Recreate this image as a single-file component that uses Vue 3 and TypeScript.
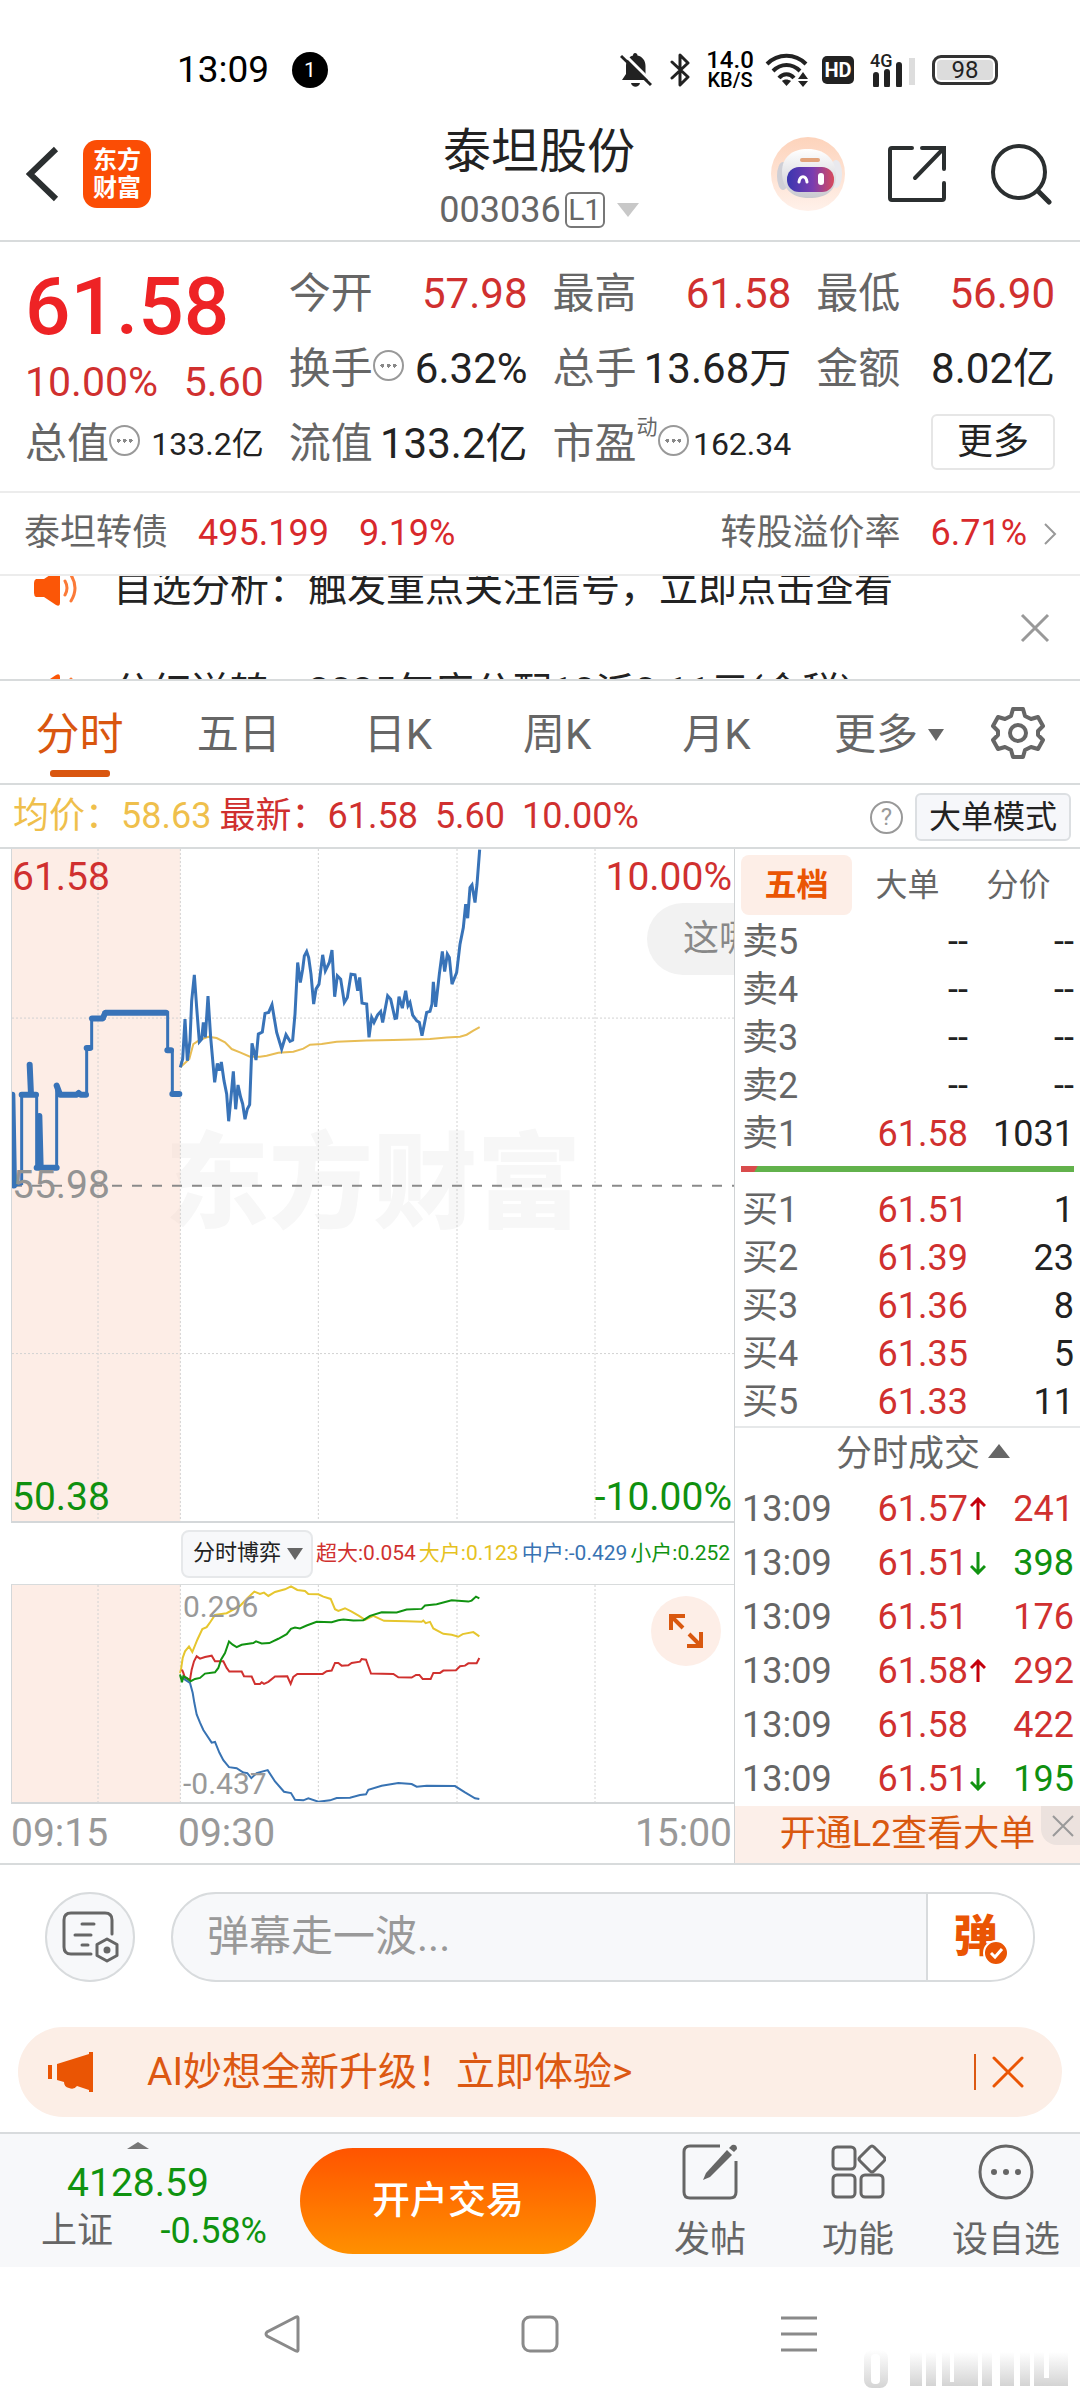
<script setup lang="ts">
interface QuoteRow {
  label: string
  price: string
  volume: string
}

interface TradeRow {
  time: string
  price: string
  volume: string
  move: 'up' | 'down' | ''
  side: 'buy' | 'sell'
}

const periods: string[] = ['分时', '五日', '日K', '周K', '月K']

const asks: QuoteRow[] = [
  { label: '卖5', price: '--', volume: '--' },
  { label: '卖4', price: '--', volume: '--' },
  { label: '卖3', price: '--', volume: '--' },
  { label: '卖2', price: '--', volume: '--' },
  { label: '卖1', price: '61.58', volume: '1031' },
]

const bids: QuoteRow[] = [
  { label: '买1', price: '61.51', volume: '1' },
  { label: '买2', price: '61.39', volume: '23' },
  { label: '买3', price: '61.36', volume: '8' },
  { label: '买4', price: '61.35', volume: '5' },
  { label: '买5', price: '61.33', volume: '11' },
]

const trades: TradeRow[] = [
  { time: '13:09', price: '61.57', volume: '241', move: 'up', side: 'buy' },
  { time: '13:09', price: '61.51', volume: '398', move: 'down', side: 'sell' },
  { time: '13:09', price: '61.51', volume: '176', move: '', side: 'buy' },
  { time: '13:09', price: '61.58', volume: '292', move: 'up', side: 'buy' },
  { time: '13:09', price: '61.58', volume: '422', move: '', side: 'buy' },
  { time: '13:09', price: '61.51', volume: '195', move: 'down', side: 'sell' },
]

const news: string[] = [
  '自选分析：触发重点关注信号，立即点击查看',
  '分红送转：2025年度分配10派0.11元(含税)',
]

// Intraday price after the open
const priceLine =
  '541,680 548,655 555,535 562,660 570,600 575,480 583,402 590,500 598,603 605,595 610,545 616,590 624,466 632,590 644,725 652,668 658,690 664,664 672,720 680,760 686,842 693,770 700,692 707,806 714,733 722,770 728,790 735,836 742,805 749,792 756,608 768,658 775,580 787,574 795,518 806,515 816,492 830,575 845,625 858,582 870,602 878,598 885,520 893,365 901,425 908,385 913,345 920,332 926,350 933,400 941,490 948,445 957,430 968,342 976,390 988,365 996,328 1004,468 1012,405 1022,415 1033,485 1042,470 1053,400 1065,402 1073,450 1079,410 1086,487 1100,490 1107,590 1115,530 1122,545 1133,522 1142,512 1148,545 1163,465 1172,475 1185,533 1190,532 1197,468 1207,502 1217,450 1224,495 1230,485 1238,523 1250,540 1258,545 1266,585 1280,515 1290,512 1296,490 1300,423 1307,498 1318,400 1327,332 1334,392 1342,340 1348,350 1356,430 1370,395 1380,310 1390,260 1397,190 1403,232 1410,140 1416,132 1425,185 1431,130 1439,26'

const averageLine =
  '541,680 568,655 580,610 600,597 625,588 650,592 675,605 695,625 720,635 750,648 780,648 800,645 835,636 880,633 910,624 930,612 965,610 1010,603 1100,599 1180,598 1290,595 1340,590 1380,588 1400,582 1420,570 1439,559'

const flowLines: { name: string; color: string; points: string }[] = [
  {
    name: 'large',
    color: '#e6c62e',
    points:
      '540,310 543,300 548,265 555,245 567,230 577,247 592,210 607,178 620,172 632,155 645,135 680,130 720,108 742,85 763,65 780,72 792,68 805,78 825,66 855,58 873,49 892,60 915,63 925,72 955,73 970,80 992,87 1005,118 1015,123 1035,115 1055,125 1077,138 1095,150 1120,138 1152,153 1220,154 1265,156 1270,152 1277,160 1290,156 1300,176 1330,192 1355,195 1375,201 1388,193 1420,187 1438,200',
  },
  {
    name: 'huge',
    color: '#d0312f',
    points:
      '546,300 550,310 555,325 570,330 575,300 582,275 590,260 600,267 615,262 635,258 645,275 670,275 680,295 688,306 725,306 732,320 755,321 765,343 780,343 785,338 792,343 805,337 825,321 862,320 872,343 880,322 892,313 968,313 980,305 995,303 1005,280 1015,280 1025,288 1045,287 1055,280 1080,276 1085,268 1098,270 1105,290 1113,312 1180,313 1195,323 1235,324 1248,316 1258,316 1268,328 1292,328 1300,310 1320,310 1330,303 1368,302 1380,290 1395,288 1405,281 1430,281 1438,265',
  },
  {
    name: 'medium',
    color: '#3873b3',
    points:
      '540,320 555,330 570,340 578,370 583,400 590,435 600,460 610,482 635,520 645,518 658,550 670,573 687,594 710,597 730,610 742,612 754,627 770,612 803,603 825,637 852,668 873,672 885,692 910,694 925,688 955,698 990,694 1010,687 1050,686 1080,678 1098,676 1105,662 1145,650 1195,642 1235,645 1250,653 1280,650 1365,651 1395,670 1425,688 1438,690',
  },
  {
    name: 'small',
    color: '#119311',
    points:
      '540,315 546,338 550,320 560,325 572,335 585,328 600,325 615,312 645,308 655,295 663,270 675,250 687,215 698,225 710,232 725,225 760,220 768,215 785,221 808,220 835,207 860,193 873,177 885,173 900,176 920,167 950,156 995,157 1015,151 1030,149 1060,152 1090,151 1110,138 1145,127 1190,128 1220,119 1265,117 1275,107 1310,103 1355,91 1405,95 1415,92 1428,80 1438,85',
  },
]

const gridX: number[] = [294, 541, 955, 1371, 1785]
</script>

<template>
  <div class="app">
    <div class="status">
      <span class="clock">13:09</span>
      <span class="count">1</span>
      <div class="status-icons">
        <svg class="i-bell" viewBox="0 0 32 34">
          <path d="M15 0c1.500 0 2.500 1 2.500 2.500 5 1.200 8 5 8 10.500v8l4 6H2l4-6v-8c0-5.500 3-9.300 7-10.500C13 1 13.800 0 15 0z" fill="#222" />
          <path d="M11 30h9c-1 5-8 5-9 0z" fill="#222" />
          <path d="M4 1l28 28" stroke="#fff" stroke-width="3" />
          <path d="M1 3l30 29" stroke="#222" stroke-width="3" />
        </svg>
        <svg class="i-bt" viewBox="0 0 20 34">
          <path d="M2 9l16 15-8 8V2l8 8L2 25" fill="none" stroke="#222" stroke-width="3" stroke-linejoin="round" stroke-linecap="round" />
        </svg>
        <span class="speed"><b>14.0</b><b class="unit">KB/S</b></span>
        <svg class="i-wifi" viewBox="0 0 44 34">
          <g fill="none" stroke="#222" stroke-width="4">
            <path d="M2 11c11-11 28-11 39 0" />
            <path d="M8 18c8-8 19-8 27 0" />
            <path d="M14 25c4-5 11-5 15 0" />
          </g>
          <path d="M17 28c2-2 6-2 9 0l-4.500 5z" fill="#222" />
          <path d="M33 26l5-7 5 7zM33 28l5 6 5-6z" fill="#222" />
        </svg>
        <span class="hd">HD</span>
        <span class="cell">
          <b>4G</b>
          <svg viewBox="0 0 46 34">
            <path d="M6 22v10M17 19v13M29 12v20" stroke="#222" stroke-width="6" stroke-linecap="round" />
            <path d="M42 5v27" stroke="#ddd" stroke-width="6" />
          </svg>
        </span>
        <span class="battery">98</span>
      </div>
    </div>

    <header class="header">
      <div class="head-left">
        <button class="plain" aria-label="返回">
          <svg width="34" height="56" viewBox="0 0 34 56"><path d="M30 3L4 28l26 25" fill="none" stroke="#2b2f30" stroke-width="6" /></svg>
        </button>
        <a class="logo" href="#"><span>东方</span><span>财富</span></a>
      </div>
      <div class="head-title">
        <h1>泰坦股份</h1>
        <div class="code">003036<span class="lv">L1</span><i class="tri-down"></i></div>
      </div>
      <div class="head-right">
        <button class="plain" aria-label="智能助手">
          <svg width="76" height="76" viewBox="0 0 76 76">
            <defs>
              <linearGradient id="halo" x1="0" y1="0" x2="0" y2="1"><stop offset="0" stop-color="#fdd3bb" /><stop offset="1" stop-color="#fff1ea" /></linearGradient>
              <linearGradient id="visor" x1="0" y1="0" x2="1" y2="0"><stop offset="0" stop-color="#3a36b0" /><stop offset=".55" stop-color="#7a3db0" /><stop offset="1" stop-color="#d84a5c" /></linearGradient>
              <linearGradient id="shell" x1="0" y1="0" x2="0" y2="1"><stop offset="0" stop-color="#fff" /><stop offset="1" stop-color="#c9c9cf" /></linearGradient>
            </defs>
            <circle cx="38" cy="38" r="37" fill="url(#halo)" />
            <ellipse cx="13" cy="40" rx="6" ry="14" fill="#cfcfd6" />
            <ellipse cx="66" cy="38" rx="6" ry="14" fill="#e9e9ee" />
            <path d="M12 36c0-15 10-23 26-23s27 9 28 25-9 24-27 24-27-10-27-26z" fill="url(#shell)" />
            <rect x="30" y="22" width="20" height="4" rx="2" fill="#e2a47c" />
            <rect x="17" y="31" width="47" height="25" rx="12" fill="url(#visor)" />
            <path d="M29 46c1-7 7-7 8 0" fill="none" stroke="#fff" stroke-width="3" stroke-linecap="round" />
            <rect x="48" y="37" width="6" height="12" rx="3" fill="#fff" />
          </svg>
        </button>
        <button class="plain" aria-label="分享">
          <svg width="60" height="60" viewBox="0 0 60 60" fill="none" stroke="#2b2f30" stroke-width="4">
            <path d="M24 4H4q-2 0-2 2v48q0 2 2 2h50q2 0 2-2V39M34 4h22v21M56 4L27 34" stroke-linecap="round" />
          </svg>
        </button>
        <button class="plain" aria-label="搜索">
          <svg width="62" height="62" viewBox="0 0 62 62" fill="none" stroke="#2b2f30" stroke-width="4">
            <circle cx="29" cy="29" r="26" /><path d="M48 48l11 11" stroke-width="5" stroke-linecap="round" />
          </svg>
        </button>
      </div>
    </header>

    <section class="quote">
      <div class="q-main">
        <strong>61.58</strong>
        <div class="q-change"><span>10.00%</span><span>5.60</span></div>
      </div>
      <div class="q-cell"><span>今开</span><b class="red">57.98</b></div>
      <div class="q-cell"><span>最高</span><b class="red">61.58</b></div>
      <div class="q-cell"><span>最低</span><b class="red">56.90</b></div>
      <div class="q-cell"><span>换手<i class="dots"></i></span><b>6.32%</b></div>
      <div class="q-cell"><span>总手</span><b>13.68万</b></div>
      <div class="q-cell"><span>金额</span><b>8.02亿</b></div>
      <div class="q-cell"><span>总值<i class="dots"></i></span><b class="small">133.2亿</b></div>
      <div class="q-cell"><span>流值</span><b>133.2亿</b></div>
      <div class="q-cell"><span>市盈<sup>动</sup><i class="dots"></i></span><b class="small">162.34</b></div>
      <div class="q-cell end"><button class="more">更多</button></div>
    </section>

    <a class="bond" href="#">
      <span>泰坦转债</span><b>495.199</b><b>9.19%</b>
      <span class="push">转股溢价率</span><b>6.71%</b>
      <svg width="14" height="24" viewBox="0 0 14 24"><path d="M2 2l10 10L2 22" fill="none" stroke="#999" stroke-width="2" /></svg>
    </a>

    <section class="news">
      <ul>
        <li v-for="n in news" :key="n">
          <svg width="46" height="38" viewBox="0 0 46 38">
            <path d="M2 10h8L22 2q4-2 4 2v30q0 4-4 2L10 28H2q-2-1-2-4V14q0-3 2-4z" fill="#fb5607" />
            <path d="M31 12q4 7 0 14M37 6q8 13 0 26" fill="none" stroke="#fb7a38" stroke-width="3" stroke-linecap="round" />
          </svg>
          <a href="#">{{ n }}</a>
        </li>
      </ul>
      <button class="plain news-close" aria-label="关闭">
        <svg width="30" height="30" viewBox="0 0 30 30"><path d="M2 2l26 26M28 2L2 28" stroke="#999" stroke-width="3" /></svg>
      </button>
    </section>

    <nav class="periods">
      <button v-for="(p, i) in periods" :key="p" :class="{ active: i === 0 }">{{ p }}</button>
      <button class="all">更多<i class="caret"></i></button>
      <button class="gear" aria-label="设置">
        <svg width="54" height="54" viewBox="0 0 54 54" fill="none" stroke="#666" stroke-width="4" stroke-linejoin="round">
          <path d="M22 3h10l2 7 6 3 7-2 5 9-5 5v4l5 5-5 9-7-2-6 3-2 7H22l-2-7-6-3-7 2-5-9 5-5v-4l-5-5 5-9 7 2 6-3z" />
          <circle cx="27" cy="27" r="8" />
        </svg>
      </button>
    </nav>

    <div class="legend">
      <span class="avg">均价：58.63</span>
      <span class="latest">最新：61.58</span>
      <span class="latest">5.60</span>
      <span class="latest">10.00%</span>
      <button class="help" aria-label="说明">?</button>
      <button class="mode">大单模式</button>
    </div>

    <main class="board">
      <div class="charts">
        <div class="plot">
          <span class="ghost">东方财富</span>
          <svg class="canvas" viewBox="36 24 2166 2019" preserveAspectRatio="none">
            <rect class="pre" x="36" y="24" width="505" height="2019" />
            <g class="grid">
              <path v-for="x in gridX" :key="x" :d="`M${x} 24V2043`" />
              <path d="M36 532H2202M36 1540H2202" />
            </g>
            <path class="zero" d="M36 1036H2202" />
            <polyline class="avg-line" :points="averageLine" />
            <path class="price thin" d="M40 1035L65 1030V762H110V982H170V735L180 762H260V622H275V533H312V516H503V629H517V760H540" />
            <path class="price thick" d="M37 762L42 1035M65 762H108M89 672L93 762M118 826L122 982M110 982H170M170 735L180 762H230L236 757L242 762H258M260 622H270M276 533H308L316 516H498M502 629H513M517 760H538" />
            <polyline class="price line" :points="priceLine" />
          </svg>
          <span class="tag hi red">61.58</span>
          <span class="tag hi pct red">10.00%</span>
          <span class="tag mid">55.98</span>
          <span class="tag lo green">50.38</span>
          <span class="tag lo pct green">-10.00%</span>
          <div class="bubble">这哪</div>
        </div>

        <div class="flow-legend">
          <div class="picker">
            <select aria-label="分时指标"><option>分时博弈</option></select>
            <i class="caret"></i>
          </div>
          <span class="c-huge">超大:0.054</span>
          <span class="c-large">大户:0.123</span>
          <span class="c-medium">中户:-0.429</span>
          <span class="c-small">小户:0.252</span>
        </div>

        <div class="plot sub">
          <svg class="canvas" viewBox="36 45 2166 654" preserveAspectRatio="none">
            <rect class="pre" x="36" y="45" width="505" height="654" />
            <g class="grid"><path v-for="x in gridX" :key="x" :d="`M${x} 45V699`" /></g>
            <polyline v-for="f in flowLines" :key="f.name" class="flow" :points="f.points" :stroke="f.color" />
          </svg>
          <span class="scale high">0.296</span>
          <span class="scale low">-0.437</span>
          <button class="expand" aria-label="全屏">
            <svg width="36" height="36" viewBox="0 0 36 36" fill="none" stroke="#d9580f" stroke-width="4">
              <path d="M3 17V3h14M3 3l12 12M33 19v14H19M33 33L21 21" />
            </svg>
          </button>
        </div>

        <div class="times"><span>09:15</span><span>09:30</span><span>15:00</span></div>
      </div>

      <aside class="depth">
        <div class="depth-tabs">
          <button class="active">五档</button><button>大单</button><button>分价</button>
        </div>
        <table class="levels">
          <tbody>
            <tr v-for="r in asks" :key="r.label">
              <th scope="row">{{ r.label }}</th>
              <td :class="{ red: r.price !== '--' }">{{ r.price }}</td>
              <td>{{ r.volume }}</td>
            </tr>
          </tbody>
        </table>
        <div class="ratio"><i></i></div>
        <table class="levels">
          <tbody>
            <tr v-for="r in bids" :key="r.label">
              <th scope="row">{{ r.label }}</th>
              <td class="red">{{ r.price }}</td>
              <td>{{ r.volume }}</td>
            </tr>
          </tbody>
        </table>
        <button class="trades-head">分时成交<i></i></button>
        <table class="trades">
          <tbody>
            <tr v-for="(t, i) in trades" :key="i">
              <th scope="row">{{ t.time }}</th>
              <td class="red">{{ t.price }}</td>
              <td class="arrow">
                <svg v-if="t.move === 'up'" width="16" height="24" viewBox="0 0 16 24" fill="none" stroke="#c4000c" stroke-width="3"><path d="M8 23V2M1 9l7-7 7 7" /></svg>
                <svg v-else-if="t.move === 'down'" width="16" height="24" viewBox="0 0 16 24" fill="none" stroke="#119311" stroke-width="3"><path d="M8 1v21M1 15l7 7 7-7" /></svg>
              </td>
              <td :class="t.side === 'buy' ? 'red' : 'green'">{{ t.volume }}</td>
            </tr>
          </tbody>
        </table>
        <div class="promo">
          <a href="#">开通L2查看大单</a>
          <button aria-label="关闭推广">
            <svg width="22" height="22" viewBox="0 0 22 22"><path d="M1 1l20 20M21 1L1 21" stroke="#999" stroke-width="2" /></svg>
          </button>
        </div>
      </aside>
    </main>

    <section class="barrage">
      <button class="b-set" aria-label="弹幕设置">
        <svg width="58" height="54" viewBox="0 0 58 54" fill="none" stroke="#666" stroke-width="3" stroke-linecap="round">
          <path d="M30 44H10q-7 0-7-7V10q0-7 7-7h34q7 0 7 7v14" />
          <path d="M21 14h12M14 25h16M21 35h6" />
          <path d="M46 29l10 5.500v11L46 51l-10-5.500v-11z" stroke-linejoin="round" /><circle cx="46" cy="40" r="2" fill="#666" />
        </svg>
      </button>
      <div class="b-field">
        <input type="text" placeholder="弹幕走一波..." aria-label="弹幕" />
        <button aria-label="弹幕开关">
          弹
          <svg width="26" height="26" viewBox="0 0 26 26"><circle cx="13" cy="13" r="12" fill="#ea5504" stroke="#fff" stroke-width="2" /><path d="M8 13l4 4 7-8" fill="none" stroke="#fff" stroke-width="3" /></svg>
        </button>
      </div>
    </section>

    <section class="banner">
      <svg width="46" height="40" viewBox="0 0 46 40" fill="#ea5504">
        <path d="M0 13h4v14H0zM9 12L41 2V0h4v40h-4v-2l-12-4q-3 4-8 2-5-1-5-6l-7-2z" />
      </svg>
      <a href="#">AI妙想全新升级！立即体验&gt;</a>
      <i></i>
      <button class="plain" aria-label="关闭横幅">
        <svg width="32" height="32" viewBox="0 0 32 32"><path d="M2 2l28 28M30 2L2 30" stroke="#ea5504" stroke-width="3" stroke-linecap="round" /></svg>
      </button>
    </section>

    <footer class="dock">
      <button class="index">
        <i></i>
        <b>4128.59</b>
        <span>上证<em>-0.58%</em></span>
      </button>
      <button class="trade">开户交易</button>
      <div class="actions">
        <button>
          <svg width="56" height="56" viewBox="0 0 56 56" fill="none" stroke="#666" stroke-width="3">
            <path d="M38 2H8Q2 2 2 8v40q0 6 6 6h40q6 0 6-6V17" />
            <path d="M21 36l3-7 21-23 5 5-22 22z" fill="#666" stroke="none" /><path d="M47 4l3-3q5-1 5 4l-3 3z" fill="#666" stroke="none" />
          </svg>
          发帖
        </button>
        <button>
          <svg width="56" height="56" viewBox="0 0 56 56" fill="none" stroke="#666" stroke-width="3">
            <rect x="3" y="3" width="22" height="22" rx="4" /><rect x="3" y="31" width="22" height="22" rx="4" /><rect x="31" y="31" width="22" height="22" rx="4" />
            <path d="M40 3q2-2 4 0l10 10q2 2 0 4L44 27q-2 2-4 0L30 17q-2-2 0-4z" />
          </svg>
          功能
        </button>
        <button>
          <svg width="56" height="56" viewBox="0 0 56 56">
            <circle cx="28" cy="28" r="26" fill="none" stroke="#666" stroke-width="3" />
            <g fill="#666"><circle cx="16" cy="28" r="3" /><circle cx="28" cy="28" r="3" /><circle cx="40" cy="28" r="3" /></g>
          </svg>
          设自选
        </button>
      </div>
    </footer>

    <div class="sysnav">
      <button class="plain" aria-label="系统返回">
        <svg width="38" height="38" viewBox="0 0 38 38"><path d="M36 3v32q0 2-2 1L5 21q-2-2 0-4L34 2q2-1 2 1z" fill="none" stroke="#8a8a8a" stroke-width="3" /></svg>
      </button>
      <button class="plain" aria-label="主屏幕">
        <svg width="38" height="38" viewBox="0 0 38 38"><rect x="2" y="2" width="34" height="34" rx="7" fill="none" stroke="#8a8a8a" stroke-width="3" /></svg>
      </button>
      <button class="plain" aria-label="最近任务">
        <svg width="38" height="38" viewBox="0 0 38 38"><path d="M1 3h36M1 19h36M1 35h36" stroke="#8a8a8a" stroke-width="3" /></svg>
      </button>
      <svg class="stamp" width="220" height="40" viewBox="0 0 220 40">
        <defs><linearGradient id="fade" x1="0" y1="0" x2="0" y2="1"><stop offset="0" stop-color="#fff" /><stop offset="1" stop-color="#d4d4d4" /></linearGradient></defs>
        <g fill="url(#fade)">
          <rect x="10" y="0" width="24" height="38" rx="8" /><rect x="56" y="2" width="12" height="34" /><rect x="72" y="2" width="10" height="34" /><rect x="88" y="2" width="36" height="34" />
          <rect x="128" y="2" width="10" height="34" /><rect x="146" y="2" width="14" height="34" /><rect x="166" y="2" width="10" height="34" /><rect x="180" y="2" width="34" height="34" />
        </g>
        <g fill="#fff"><rect x="17" y="4" width="9" height="30" rx="4" /><rect x="96" y="2" width="4" height="30" /><rect x="190" y="2" width="5" height="26" /></g>
      </svg>
    </div>
  </div>
</template>

<style>
body {
  margin: 0;
  background: #fff;
}
</style>

<style scoped>
.app {
  background: #fff;
  color: #222;
  font-family: Roboto, 'Noto Sans CJK SC', sans-serif;
  font-size: 36px;
  line-height: 1.2;
}
.app * {
  box-sizing: border-box;
}
button,
input,
select {
  font: inherit;
  color: inherit;
  border: 0;
  margin: 0;
  padding: 0;
  background: none;
}
a {
  color: inherit;
  text-decoration: none;
}
i,
em {
  font-style: normal;
}
b {
  font-weight: 400;
}
svg {
  display: block;
  flex: none;
}
.plain {
  display: flex;
}
.red {
  color: #d0302f;
}
.green {
  color: #0f900f;
}

.status {
  display: flex;
  align-items: center;
  height: 100px;
  padding: 40px 82px 0 177px;
  color: #000;
}
.clock {
  width: 115px;
  font-size: 37px;
  line-height: 60px;
}
.count {
  width: 36px;
  height: 36px;
  border-radius: 50%;
  background: #000;
  color: #fff;
  font-size: 21px;
  line-height: 36px;
  text-align: center;
}
.status-icons {
  display: flex;
  align-items: center;
  margin-left: auto;
  color: #222;
}
.i-bell {
  width: 32px;
  height: 34px;
}
.i-bt {
  width: 20px;
  height: 34px;
  margin: 0 16px 0 18px;
}
.speed {
  display: flex;
  flex-direction: column;
  align-items: center;
  width: 48px;
  font-size: 24px;
  line-height: 20px;
}
.speed b {
  font-weight: 500;
  color: #000;
}
.speed .unit {
  font-size: 20px;
}
.i-wifi {
  width: 44px;
  height: 34px;
  margin: 0 13px 0 11px;
}
.hd {
  width: 32px;
  border-radius: 5px;
  background: #222;
  color: #fff;
  font-size: 20px;
  font-weight: 700;
  line-height: 28px;
  text-align: center;
}
.cell {
  position: relative;
  margin: 0 16px;
}
.cell svg {
  width: 46px;
  height: 34px;
}
.cell b {
  position: absolute;
  left: 0;
  top: 0;
  font-size: 18px;
  font-weight: 500;
  line-height: 16px;
}
.battery {
  width: 66px;
  height: 30px;
  border: 3px solid #333;
  border-radius: 9px;
  background: #dcdcdc;
  box-shadow: inset 0 0 0 2px #fff;
  font-size: 24px;
  line-height: 25px;
  text-align: center;
}

.header {
  display: grid;
  grid-template-columns: 1fr auto 1fr;
  align-items: center;
  height: 142px;
  padding: 8px 28px 0 26px;
  border-bottom: 2px solid #d8dbdc;
}
.head-left,
.head-right {
  display: flex;
  align-items: center;
}
.head-left {
  gap: 23px;
}
.head-right {
  justify-content: flex-end;
  gap: 42px;
}
.logo {
  display: flex;
  flex-direction: column;
  justify-content: center;
  width: 68px;
  height: 68px;
  border-radius: 14px;
  background: #fb4d05;
  color: #fff;
  font-size: 24px;
  font-weight: 700;
  line-height: 28px;
  text-align: center;
}
.head-title {
  padding-top: 12px;
  text-align: center;
}
h1 {
  margin: 0;
  font-size: 48px;
  font-weight: 400;
  line-height: 60px;
}
.code {
  display: flex;
  align-items: center;
  justify-content: center;
  color: #666;
  font-size: 36px;
  line-height: 56px;
}
.lv {
  width: 40px;
  margin: 0 12px 0 4px;
  border: 2px solid #777;
  border-radius: 6px;
  font-size: 30px;
  line-height: 32px;
}
.tri-down {
  border: 11px solid transparent;
  border-top: 14px solid #c8c8c8;
  border-bottom: 0;
}

.quote {
  display: grid;
  grid-template-columns: repeat(4, minmax(0, 1fr));
  grid-auto-rows: 75px;
  column-gap: 25px;
  height: 251px;
  padding: 15px 25px 0;
  border-bottom: 2px solid #ececec;
}
.q-main {
  grid-row: span 2;
  color: #d0302f;
}
.q-main strong {
  display: block;
  color: #ee2325;
  font-size: 80px;
  font-weight: 500;
  line-height: 100px;
}
.q-change {
  display: flex;
  justify-content: space-between;
  font-size: 41px;
  line-height: 50px;
}
.q-cell {
  display: flex;
  align-items: center;
  justify-content: space-between;
  font-size: 42px;
  white-space: nowrap;
}
.q-cell.end {
  justify-content: flex-end;
}
.q-cell span {
  display: flex;
  align-items: center;
  color: #666;
}
.q-cell .small {
  font-size: 32px;
}
.q-cell sup {
  align-self: flex-start;
  margin-top: -4px;
  font-size: 21px;
  line-height: 24px;
}
.dots {
  width: 31px;
  height: 31px;
  margin-bottom: 8px;
  border: 2px solid #999;
  border-radius: 50%;
  background: radial-gradient(circle, #888 2px, transparent 2px) 50% 50% / 7px 7px no-repeat,
    radial-gradient(circle, #888 2px, transparent 2px) 20% 50% / 7px 7px no-repeat,
    radial-gradient(circle, #888 2px, transparent 2px) 80% 50% / 7px 7px no-repeat;
}
.more {
  width: 124px;
  height: 56px;
  border: 2px solid #e6e6e6;
  border-radius: 6px;
  font-size: 36px;
  line-height: 52px;
}
.q-cell.end {
  padding-bottom: 6px;
}

.bond {
  display: flex;
  align-items: center;
  height: 83px;
  padding: 0 23px 0 24px;
  border-bottom: 2px solid #ececec;
  color: #666;
}
.bond b {
  margin-left: 30px;
  color: #d8292c;
}
.bond .push {
  margin-left: auto;
}
.bond svg {
  margin-left: 16px;
}

.news {
  display: flex;
  align-items: center;
  justify-content: space-between;
  height: 105px;
  padding: 0 30px 0 34px;
  overflow: hidden;
  border-bottom: 2px solid #d8dbdc;
}
.news ul {
  align-self: flex-start;
  margin: -40px 0 0;
  padding: 0;
  list-style: none;
}
.news li {
  display: flex;
  align-items: center;
  gap: 33px;
  height: 104px;
  font-size: 39px;
  white-space: nowrap;
}

.periods {
  display: flex;
  height: 104px;
  border-bottom: 2px solid #d8dbdc;
  color: #666;
  font-size: 42px;
}
.periods button {
  position: relative;
  display: flex;
  flex: 1;
  align-items: center;
  justify-content: center;
  padding-top: 6px;
}
.periods .all {
  flex: none;
  width: 160px;
  padding-left: 26px;
}
.periods .gear {
  flex: none;
  width: 124px;
  padding-top: 2px;
}
.periods .active {
  color: #d9560f;
  font-size: 44px;
}
.periods .active::after {
  content: '';
  position: absolute;
  bottom: 6px;
  left: calc(50% - 30px);
  width: 60px;
  height: 7px;
  border-radius: 3px;
  background: #d9560f;
}
.caret {
  border: 8px solid transparent;
  border-top: 12px solid #666;
  border-bottom: 0;
}
.periods .caret {
  margin-left: 10px;
}

.legend {
  display: flex;
  align-items: center;
  height: 64px;
  padding: 2px 9px 0 13px;
  border-bottom: 2px solid #d8dbdc;
}
.legend .avg {
  margin-right: 8px;
  color: #efbf4c;
}
.legend .latest {
  margin-right: 17px;
  color: #d0302f;
}
.help {
  width: 33px;
  height: 33px;
  margin: 0 12px 0 auto;
  border: 2px solid #999;
  border-radius: 50%;
  color: #999;
  font-size: 24px;
  line-height: 29px;
}
.mode {
  width: 156px;
  height: 48px;
  border: 2px solid #dcdfe2;
  border-radius: 6px;
  background: #f6f7fa;
  font-size: 32px;
  line-height: 44px;
}

.board {
  display: grid;
  grid-template-columns: minmax(0, 1fr) 345px;
  border-bottom: 2px solid #d8dbdc;
}
.charts {
  padding-left: 11px;
  border-right: 1px solid #d0d3d5;
}
.plot {
  position: relative;
  height: 674px;
  border-bottom: 2px solid #d4d7d9;
  border-left: 1px solid #d4d7d9;
}
.plot.sub {
  height: 220px;
  border-top: 1px solid #d8dbdc;
}
.canvas {
  position: relative;
  width: 100%;
  height: 100%;
  fill: none;
  overflow: hidden;
}
.canvas * {
  vector-effect: non-scaling-stroke;
}
.pre {
  fill: #f9c9b5;
  fill-opacity: 0.34;
}
.grid {
  stroke: #d2d2d2;
  stroke-width: 1px;
  stroke-dasharray: 2 2;
}
.zero {
  stroke: #8a8a8a;
  stroke-width: 2px;
  stroke-dasharray: 10 10;
}
.avg-line {
  stroke: #e8bd55;
  stroke-width: 2px;
}
.price {
  stroke: #3873b8;
  stroke-width: 3px;
}
.price.thick {
  stroke-width: 6px;
  stroke-linecap: round;
  stroke-linejoin: round;
}
.flow {
  stroke-width: 2px;
}
.ghost {
  position: absolute;
  top: 50%;
  left: 50%;
  transform: translate(-50%, -50%);
  color: #f7f7f7;
  font-size: 104px;
  font-weight: 900;
  line-height: 104px;
  white-space: nowrap;
}
.tag {
  position: absolute;
  left: 0;
  font-size: 39px;
  line-height: 48px;
}
.tag.pct {
  right: 2px;
  left: auto;
}
.tag.hi {
  top: 4px;
}
.tag.mid {
  top: calc(50% - 24px);
  color: #939393;
}
.tag.lo {
  bottom: 0;
}
.bubble {
  position: absolute;
  top: 54px;
  right: 0;
  width: 87px;
  padding-left: 36px;
  overflow: hidden;
  border-radius: 36px 0 0 36px;
  background: #f2f2f2;
  color: #888;
  line-height: 72px;
  white-space: nowrap;
}
.flow-legend {
  display: flex;
  align-items: center;
  gap: 3px;
  height: 61px;
  padding-left: 170px;
  font-size: 21px;
  white-space: nowrap;
}
.picker {
  position: relative;
  width: 132px;
}
.picker select {
  width: 100%;
  height: 48px;
  padding-left: 10px;
  appearance: none;
  border: 2px solid #e6e8ea;
  border-radius: 8px;
  background: #f7f8fa;
  font-size: 22px;
}
.picker .caret {
  position: absolute;
  top: 18px;
  right: 10px;
}
.c-huge {
  color: #d0312f;
}
.c-large {
  color: #e6c21e;
}
.c-medium {
  color: #3873b3;
}
.c-small {
  color: #119311;
}
.scale {
  position: absolute;
  left: 171px;
  color: #999;
  font-size: 30px;
  line-height: 36px;
}
.scale.high {
  top: 4px;
}
.scale.low {
  bottom: 0;
}
.expand {
  position: absolute;
  top: 11px;
  right: 13px;
  display: flex;
  align-items: center;
  justify-content: center;
  width: 70px;
  height: 70px;
  border-radius: 50%;
  background: #fdeee7;
}
.times {
  display: grid;
  grid-template-columns: 167px 1fr auto;
  padding-right: 2px;
  color: #999;
  font-size: 39px;
  line-height: 59px;
}

.depth {
  display: flex;
  flex-direction: column;
}
.depth-tabs {
  display: flex;
  height: 69px;
  padding: 6px 6px 3px 6px;
  color: #666;
  font-size: 32px;
}
.depth-tabs button {
  flex: 1;
}
.depth-tabs .active {
  border-radius: 8px;
  background: #fdeee7;
  color: #ea5504;
  font-weight: 700;
}
table {
  width: 332px;
  margin-left: 7px;
  border-collapse: collapse;
  table-layout: fixed;
}
tr {
  height: 48px;
}
th,
td {
  padding: 0;
  line-height: 44px;
  text-align: right;
}
th {
  color: #666;
  font-weight: 400;
  text-align: left;
}
.levels th {
  width: 100px;
}
.levels td:last-child {
  width: 106px;
}
.ratio {
  height: 6px;
  margin: 8px 6px 14px;
  background: #62b24c;
}
.ratio i {
  display: block;
  width: 5%;
  height: 6px;
  background: #d94c4c;
  clip-path: polygon(0 0, 100% 0, 80% 100%, 0 100%);
}
.trades-head {
  display: flex;
  align-items: center;
  justify-content: center;
  gap: 8px;
  height: 56px;
  padding-left: 45px;
  padding-right: 14px;
  border-top: 2px solid #e6e8e9;
  color: #666;
}
.trades-head i {
  margin-bottom: 8px;
  border: 11px solid transparent;
  border-bottom: 14px solid #666;
  border-top: 0;
}
.trades tr {
  height: 54px;
}
.trades th {
  width: 110px;
}
.trades .arrow {
  width: 20px;
}
.trades .arrow svg {
  margin-left: 2px;
}
.trades td:last-child {
  width: 86px;
}
.promo {
  position: relative;
  flex: 1;
  background: #fcefe9;
  color: #d9580f;
  line-height: 57px;
  text-align: center;
}
.promo button {
  position: absolute;
  top: 0;
  right: 0;
  display: flex;
  align-items: center;
  justify-content: center;
  width: 39px;
  height: 39px;
  padding-left: 5px;
  border-bottom-left-radius: 16px;
  background: #ece2de;
}

.barrage {
  display: flex;
  gap: 36px;
  padding: 27px 45px 45px;
}
.b-set {
  display: flex;
  align-items: center;
  justify-content: center;
  width: 90px;
  height: 90px;
  border: 2px solid #d8dbdd;
  border-radius: 50%;
  background: #f7f8fa;
}
.b-field {
  display: flex;
  flex: 1;
  height: 90px;
  overflow: hidden;
  border: 2px solid #d8dbdd;
  border-radius: 45px;
  background: #f7f8fa;
}
.b-field input {
  flex: 1;
  min-width: 0;
  padding-left: 34px;
  font-size: 42px;
  outline: 0;
}
.b-field input::placeholder {
  color: #999;
  opacity: 1;
}
.b-field button {
  position: relative;
  width: 107px;
  padding-right: 10px;
  border-left: 2px solid #d8dbdd;
  background: #fff;
  color: #ea5504;
  font-size: 44px;
  font-weight: 900;
}
.b-field button svg {
  position: absolute;
  right: 24px;
  bottom: 14px;
}

.banner {
  display: flex;
  align-items: center;
  height: 90px;
  margin: 0 18px 15px;
  padding: 0 38px 0 30px;
  border-radius: 45px;
  background: #fceee6;
  color: #dc5812;
  font-size: 39px;
}
.banner a {
  margin-left: 53px;
}
.banner i {
  width: 2px;
  height: 36px;
  margin: 0 16px 0 auto;
  background: #dc5812;
}

.dock {
  display: flex;
  align-items: center;
  height: 135px;
  padding-left: 34px;
  border-top: 2px solid #d8dbdd;
  background: #f7f8fa;
  color: #666;
}
.index {
  display: flex;
  flex-direction: column;
  align-items: center;
  align-self: stretch;
  width: 236px;
  padding-top: 8px;
  line-height: 48px;
}
.index i,
.index b {
  margin-right: 28px;
}
.index i {
  border: 11px solid transparent;
  border-top: 0;
  border-bottom: 7px solid #777;
}
.index b {
  margin-top: 10px;
  color: #0f930f;
  font-size: 39px;
}
.index span {
  display: flex;
  justify-content: space-between;
  width: 100%;
  padding-left: 7px;
  padding-right: 3px;
}
.index em {
  color: #0f930f;
}
.trade {
  width: 296px;
  height: 106px;
  margin-left: 30px;
  border-radius: 53px;
  background: linear-gradient(#ff5400, #ff9000);
  color: #fff;
  font-size: 38px;
  font-weight: 500;
}
.actions {
  display: grid;
  flex: 1;
  grid-template-columns: repeat(3, 1fr);
  align-self: stretch;
  padding-left: 40px;
}
.actions button {
  display: flex;
  flex-direction: column;
  align-items: center;
  padding-top: 10px;
  line-height: 80px;
}
.sysnav {
  position: relative;
  display: flex;
  align-items: center;
  justify-content: space-between;
  height: 133px;
  padding: 0 262px;
}
.stamp {
  position: absolute;
  right: 6px;
  bottom: 10px;
}
</style>
